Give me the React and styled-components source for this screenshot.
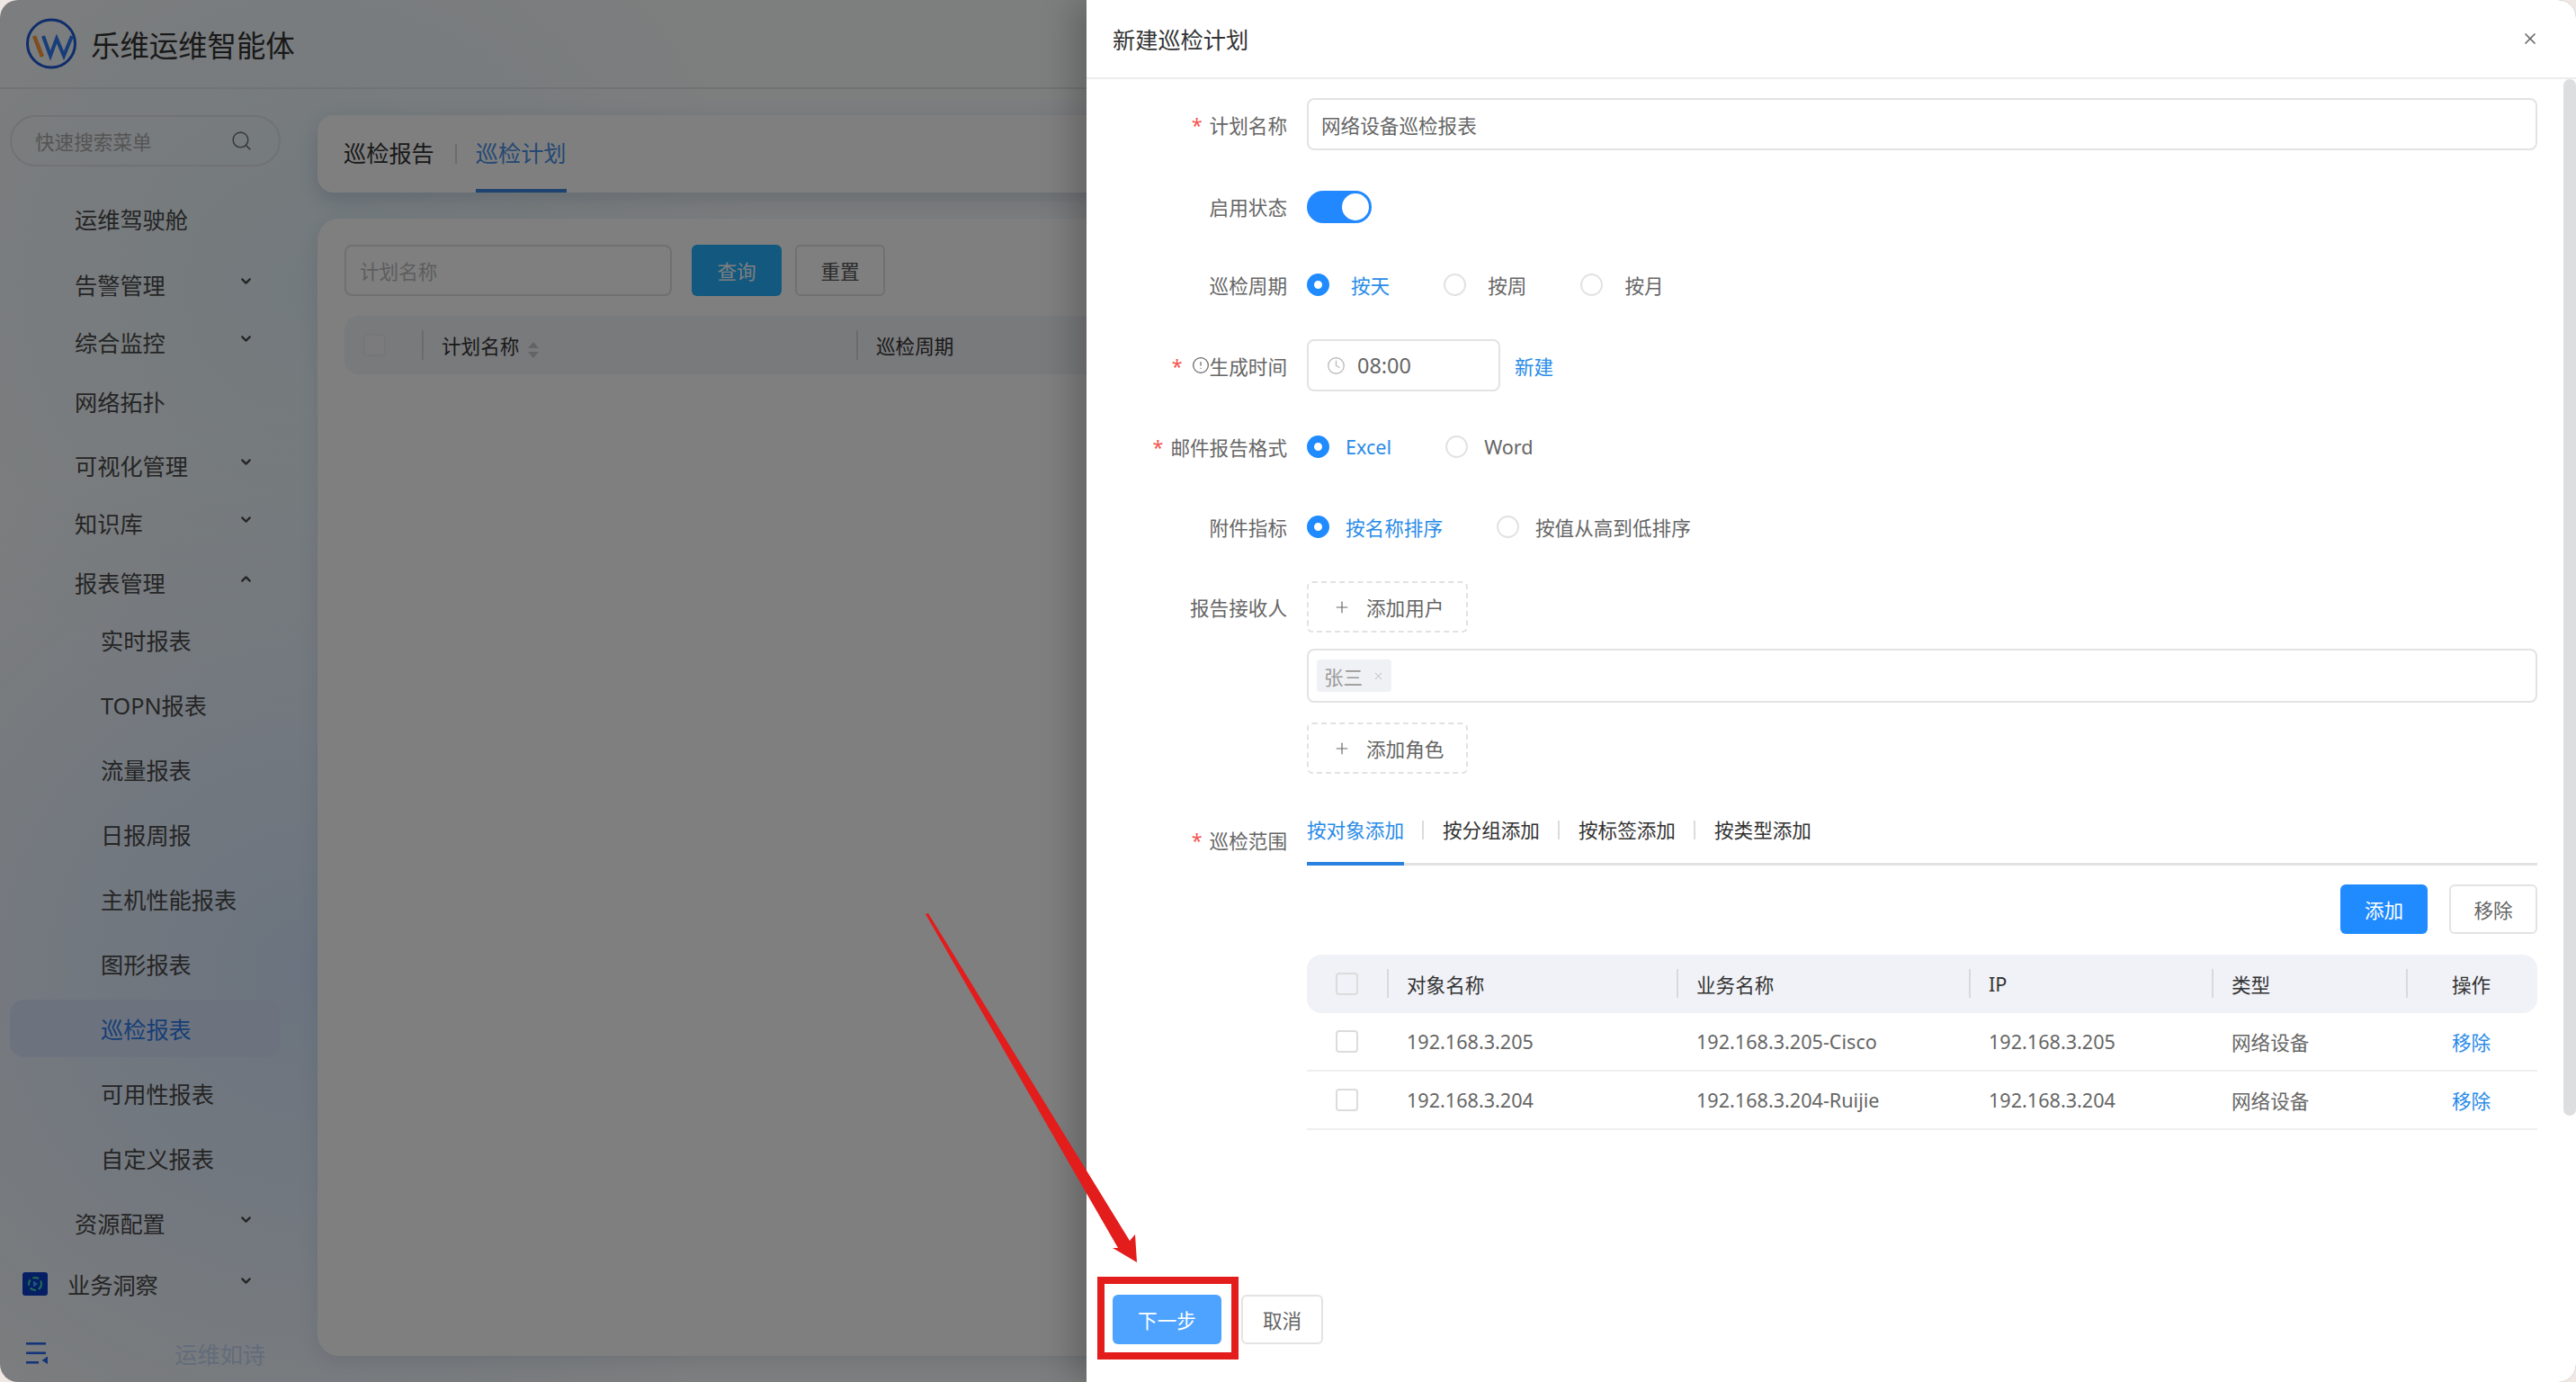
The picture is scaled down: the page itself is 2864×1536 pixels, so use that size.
import React from "react";
import styled, { createGlobalStyle } from "styled-components";
import { ChevronDown, ChevronUp, CircleAlert, Clock, Plus, Search, X } from "lucide-react";

const GlobalStyle = createGlobalStyle`
  html, body {
    margin: 0;
    width: 2864px;
    height: 1536px;
    overflow: hidden;
    background: #efe7e3;
  }
  * {
    box-sizing: border-box;
  }
  body {
    font-family: "Noto Sans", "Noto Sans CJK SC", sans-serif;
    font-size: 21.6px;
  }
`;

const menu = [
  { label: "运维驾驶舱", mt: 0 },
  { label: "告警管理", mt: 9, arrow: "down" },
  { label: "综合监控", mt: 0, arrow: "down" },
  { label: "网络拓扑", mt: 2 },
  { label: "可视化管理", mt: 7, arrow: "down" },
  { label: "知识库", mt: 0, arrow: "down" },
  { label: "报表管理", mt: 2, arrow: "up" },
  { label: "实时报表", mt: 0, sub: true },
  { label: "TOPN报表", mt: 8, sub: true },
  { label: "流量报表", mt: 8, sub: true },
  { label: "日报周报", mt: 8, sub: true },
  { label: "主机性能报表", mt: 8, sub: true },
  { label: "图形报表", mt: 8, sub: true },
  { label: "巡检报表", mt: 8, sub: true, active: true },
  { label: "可用性报表", mt: 8, sub: true },
  { label: "自定义报表", mt: 8, sub: true },
  { label: "资源配置", mt: 8, arrow: "down" },
];

const rows = [
  { name: "192.168.3.205", biz: "192.168.3.205-Cisco", ip: "192.168.3.205" },
  { name: "192.168.3.204", biz: "192.168.3.204-Ruijie", ip: "192.168.3.204" },
];

const Logo = () => (
  <svg width="56" height="57" viewBox="0 0 56 57" fill="none">
    <circle cx="28" cy="28.5" r="26.5" stroke="#1e5ad6" strokeWidth="3" />
    <path d="M9 20L18 43" stroke="#ff9a3c" strokeWidth="4.5" />
    <path d="M19 20L27 42L34 23L42 42L51 20" stroke="#2e7cf0" strokeWidth="4" />
  </svg>
);

const BizGlyph = () => (
  <svg width="28" height="26" viewBox="0 0 28 26">
    <rect width="28" height="26" rx="3" fill="#0a3cc8" />
    <circle cx="14" cy="13" r="7" fill="none" stroke="#3fe0a0" strokeWidth="2" strokeDasharray="7 3" />
    <path d="M12 9.5L17 13L12 16.5Z" fill="#3fb0ff" />
  </svg>
);

const FoldGlyph = () => (
  <svg width="25" height="24" viewBox="0 0 25 24" fill="#2a6af4">
    <rect y="0" width="22" height="2.6" />
    <rect y="10.5" width="22" height="2.6" />
    <rect y="21" width="14" height="2.6" />
    <path d="M24 15.5V24L17.5 20Z" />
  </svg>
);

const Annotation = () => (
  <AnnotationLayer viewBox="0 0 2864 1536">
    <polygon points="1029,1016 1032,1015 1256,1379 1262,1372 1264,1403 1237,1387 1243,1387" fill="#e31c1c" />
    <rect x="1224" y="1423" width="149" height="84" fill="none" stroke="#e31c1c" strokeWidth="8" />
  </AnnotationLayer>
);

const App = () => {
  return (
    <Frame>
      <GlobalStyle />
      <TopBar>
        <Logo />
        <Brand>乐维运维智能体</Brand>
      </TopBar>
      <Workspace>
        <Sidebar>
          <SearchPill>
            快速搜索菜单
            <Search size={25} strokeWidth={1.5} color="#777" />
          </SearchPill>
          <Menu>
            {menu.map((item) => (
              <MenuRow key={item.label} $mt={item.mt} $sub={item.sub} $active={item.active}>
                {item.label}
                {item.arrow === "down" && (
                  <MenuArrow>
                    <ChevronDown size={17} strokeWidth={3.2} />
                  </MenuArrow>
                )}
                {item.arrow === "up" && (
                  <MenuArrow>
                    <ChevronUp size={17} strokeWidth={3.2} />
                  </MenuArrow>
                )}
              </MenuRow>
            ))}
            <BizRow>
              <BizGlyph />
              业务洞察
              <MenuArrow>
                <ChevronDown size={17} strokeWidth={3.2} />
              </MenuArrow>
            </BizRow>
          </Menu>
          <SideFooter>
            <FoldGlyph />
            <Motto>运维如诗</Motto>
          </SideFooter>
        </Sidebar>
        <Main>
          <TabCard>
            <PageTab>巡检报告</PageTab>
            <TabDivider />
            <PageTab $active>巡检计划</PageTab>
          </TabCard>
          <ContentCard>
            <FilterBar>
              <FilterInput>计划名称</FilterInput>
              <FilterButton $primary>查询</FilterButton>
              <FilterButton>重置</FilterButton>
            </FilterBar>
            <PlanHead>
              <PlanCell>
                <Check $dim />
              </PlanCell>
              <PlanCell $divider>
                计划名称
                <SortArrows />
              </PlanCell>
              <PlanCell $divider>巡检周期</PlanCell>
              <PlanCell $divider />
            </PlanHead>
          </ContentCard>
        </Main>
      </Workspace>
      <Overlay />
      <Drawer>
        <DrawerHead>
          新建巡检计划
          <X size={20} strokeWidth={2} color="#666" />
        </DrawerHead>
        <DrawerBody>
          <Thumb />
          <FormRow>
            <Label>
              <Star>*</Star>计划名称
            </Label>
            <TextBox>网络设备巡检报表</TextBox>
          </FormRow>
          <FormRow $mt={34}>
            <Label>启用状态</Label>
            <Switch />
          </FormRow>
          <FormRow $mt={30}>
            <Label>巡检周期</Label>
            <RadioGroup>
              <RadioItem $on $gap={24}>
                <Radio $on />
                按天
              </RadioItem>
              <RadioItem $gap={24}>
                <Radio />
                按周
              </RadioItem>
              <RadioItem $gap={24}>
                <Radio />
                按月
              </RadioItem>
            </RadioGroup>
          </FormRow>
          <FormRow $mt={32}>
            <Label>
              <Star $gap={10}>*</Star>
              <CircleAlert size={20} strokeWidth={1.5} />
              生成时间
            </Label>
            <TimeBox>
              <Clock size={21} strokeWidth={1.5} color="#bbb" />
              08:00
            </TimeBox>
            <LinkText>新建</LinkText>
          </FormRow>
          <FormRow $mt={33}>
            <Label>
              <Star>*</Star>邮件报告格式
            </Label>
            <RadioGroup>
              <RadioItem $on>
                <Radio $on />
                Excel
              </RadioItem>
              <RadioItem>
                <Radio />
                Word
              </RadioItem>
            </RadioGroup>
          </FormRow>
          <FormRow $mt={32}>
            <Label>附件指标</Label>
            <RadioGroup>
              <RadioItem $on>
                <Radio $on />
                按名称排序
              </RadioItem>
              <RadioItem>
                <Radio />
                按值从高到低排序
              </RadioItem>
            </RadioGroup>
          </FormRow>
          <FormRow $mt={32}>
            <Label>报告接收人</Label>
            <DashedButton>
              <Plus size={20} strokeWidth={1.4} />
              添加用户
            </DashedButton>
          </FormRow>
          <FormRow $mt={18}>
            <span />
            <TagBox>
              <Tag>
                张三
                <X size={13} strokeWidth={1.5} color="#aaa" />
              </Tag>
            </TagBox>
          </FormRow>
          <FormRow $mt={22}>
            <span />
            <DashedButton>
              <Plus size={20} strokeWidth={1.4} />
              添加角色
            </DashedButton>
          </FormRow>
          <ScopeRow>
            <Label>
              <Star>*</Star>巡检范围
            </Label>
            <ScopeTabs>
              <ScopeTab $active>按对象添加</ScopeTab>
              <ScopeTab>按分组添加</ScopeTab>
              <ScopeTab>按标签添加</ScopeTab>
              <ScopeTab $last>按类型添加</ScopeTab>
            </ScopeTabs>
          </ScopeRow>
          <ScopePanel>
            <ScopeActions>
              <SolidButton>添加</SolidButton>
              <GhostButton>移除</GhostButton>
            </ScopeActions>
            <TableHead>
              <CheckCell>
                <Check $head />
              </CheckCell>
              <HeadCell>对象名称</HeadCell>
              <HeadCell>业务名称</HeadCell>
              <HeadCell>IP</HeadCell>
              <HeadCell>类型</HeadCell>
              <HeadCell $wide>操作</HeadCell>
            </TableHead>
            {rows.map((row) => (
              <TableRow key={row.name}>
                <CheckCell>
                  <Check />
                </CheckCell>
                <BodyCell>{row.name}</BodyCell>
                <BodyCell>{row.biz}</BodyCell>
                <BodyCell>{row.ip}</BodyCell>
                <BodyCell>网络设备</BodyCell>
                <BodyCell $wide $link>
                  移除
                </BodyCell>
              </TableRow>
            ))}
          </ScopePanel>
        </DrawerBody>
        <DrawerFoot>
          <NextButton>下一步</NextButton>
          <CancelButton>取消</CancelButton>
        </DrawerFoot>
      </Drawer>
      <Annotation />
    </Frame>
  );
};

export default App;

const Frame = styled.div`
  position: relative;
  display: flex;
  flex-direction: column;
  width: 2864px;
  height: 1536px;
  overflow: hidden;
  border-radius: 20px;
  color: #444;
  background:
    radial-gradient(circle 620px at 345px 1080px, #d6e8ff 0%, rgba(214, 232, 255, 0) 100%),
    radial-gradient(circle 500px at 345px 320px, #e6f4fb 0%, rgba(230, 244, 251, 0) 100%),
    #fafcfd;
`;

const TopBar = styled.header`
  display: flex;
  align-items: center;
  gap: 16px;
  flex: none;
  height: 99px;
  padding-left: 29px;
  border-bottom: 2px solid #e2e6ea;
`;

const Brand = styled.div`
  font-size: 32.4px;
  color: #333;
`;

const Workspace = styled.div`
  display: flex;
  flex: 1;
  min-height: 0;
`;

const Sidebar = styled.aside`
  display: flex;
  flex-direction: column;
  flex: none;
  width: 353px;
  padding-top: 29px;
`;

const SearchPill = styled.div`
  display: flex;
  align-items: center;
  justify-content: space-between;
  width: 301px;
  height: 57px;
  margin-left: 11px;
  padding: 0 29px 0 26px;
  border: 2px solid #e0e4e8;
  border-radius: 29px;
  color: #aaa;
`;

const Menu = styled.nav`
  display: flex;
  flex-direction: column;
  margin-top: 26px;
`;

const MenuRow = styled.div`
  position: relative;
  display: flex;
  align-items: center;
  width: 301px;
  height: 64px;
  margin-left: 11px;
  margin-top: ${(p) => p.$mt}px;
  padding-left: ${(p) => (p.$sub ? 101 : 72)}px;
  border-radius: 16px;
  font-size: 25.2px;
  color: ${(p) => (p.$active ? "#2f7dec" : "#4a4a4a")};
  background: ${(p) => (p.$active ? "#d8e6ff" : "transparent")};
`;

const MenuArrow = styled.span`
  position: absolute;
  top: 20px;
  left: 254px;
  display: flex;
  color: #4a4a4a;
`;

const BizRow = styled(MenuRow)`
  gap: 22px;
  margin-top: 4px;
  padding-left: 14px;
`;

const SideFooter = styled.div`
  display: flex;
  align-items: center;
  justify-content: space-between;
  height: 65px;
  margin-top: auto;
  padding: 0 58px 0 29px;
`;

const Motto = styled.span`
  font-size: 25.2px;
  color: #c6d8f4;
`;

const Main = styled.main`
  display: flex;
  flex-direction: column;
  flex: 1;
  gap: 29px;
  padding: 29px 29px 29px 0;
`;

const TabCard = styled.div`
  display: flex;
  align-items: stretch;
  flex: none;
  height: 86px;
  padding-left: 29px;
  border-radius: 18px;
  background: #fff;
  box-shadow: 0 8px 24px rgba(60, 90, 130, 0.22);
`;

const PageTab = styled.div`
  display: flex;
  align-items: center;
  height: 86px;
  font-size: 25.2px;
  color: ${(p) => (p.$active ? "#4a90e8" : "#333")};
  border-bottom: 4px solid ${(p) => (p.$active ? "#3d86e0" : "transparent")};
`;

const TabDivider = styled.span`
  align-self: center;
  width: 2px;
  height: 22px;
  margin: 0 21px 0 23px;
  background: #d8d8d8;
`;

const ContentCard = styled.section`
  flex: 1;
  padding: 29px 30px;
  border-radius: 24px;
  background: #fff;
  box-shadow: 0 6px 22px rgba(60, 90, 130, 0.12);
`;

const FilterBar = styled.div`
  display: flex;
  align-items: center;
  gap: 15px;
  margin-bottom: 22px;
`;

const FilterInput = styled.div`
  display: flex;
  align-items: center;
  width: 364px;
  height: 57px;
  margin-right: 7px;
  padding-left: 15px;
  border: 2px solid #dfe1e4;
  border-radius: 8px;
  color: #bbb;
`;

const FilterButton = styled.div`
  display: flex;
  align-items: center;
  justify-content: center;
  width: 100px;
  height: 57px;
  border: 2px solid ${(p) => (p.$primary ? "transparent" : "#dfe1e4")};
  border-radius: 6px;
  color: ${(p) => (p.$primary ? "#fff" : "#555")};
  background: ${(p) => (p.$primary ? "#24b0ff" : "#fff")};
`;

const PlanHead = styled.div`
  display: grid;
  grid-template-columns: 86px 483px 256px 1fr;
  height: 65px;
  border-radius: 16px;
  background: #f3f4f8;
`;

const PlanCell = styled.div`
  position: relative;
  display: flex;
  align-items: center;
  gap: 10px;
  padding-left: ${(p) => (p.$divider ? 22 : 21)}px;
  color: #333;

  &::before {
    content: "";
    display: ${(p) => (p.$divider ? "block" : "none")};
    position: absolute;
    left: 0;
    top: 16px;
    width: 2px;
    height: 33px;
    background: #d5d6da;
  }
`;

const SortArrows = styled.span`
  display: inline-block;
  width: 0;
  height: 0;
  margin-left: 0;
  border-left: 6px solid transparent;
  border-right: 6px solid transparent;
  border-bottom: 7px solid #c8c8c8;
  box-shadow: none;
  position: relative;

  &::after {
    content: "";
    position: absolute;
    left: -6px;
    top: 11px;
    border-left: 6px solid transparent;
    border-right: 6px solid transparent;
    border-top: 7px solid #c8c8c8;
  }
`;

const Check = styled.span`
  display: block;
  width: 25px;
  height: 25px;
  border: 2px solid ${(p) => (p.$dim ? "#eceef2" : "#dcdcdc")};
  border-radius: 4px;
  background: ${(p) => (p.$head ? "#f1f2f7" : p.$dim ? "#f6f7fa" : "#fff")};
`;

const Overlay = styled.div`
  position: absolute;
  inset: 0;
  background: rgba(0, 0, 0, 0.5);
`;

const Drawer = styled.aside`
  position: absolute;
  top: 0;
  right: 0;
  bottom: 0;
  display: flex;
  flex-direction: column;
  width: 1656px;
  background: #fff;
  color: #666;
  box-shadow: -14px 0 36px rgba(0, 0, 0, 0.22);
`;

const DrawerHead = styled.div`
  display: flex;
  align-items: center;
  justify-content: space-between;
  flex: none;
  height: 88px;
  padding: 0 41px 0 29px;
  border-bottom: 2px solid #ececec;
  font-size: 25.2px;
  color: #333;
`;

const DrawerBody = styled.div`
  position: relative;
  flex: 1;
  min-height: 0;
  padding: 21px 43px 0 0;
`;

const Thumb = styled.div`
  position: absolute;
  top: 0;
  right: 0;
  width: 14px;
  height: 1152px;
  border-radius: 7px;
  background: #dddee0;
`;

const FormRow = styled.div`
  display: grid;
  grid-template-columns: 223px auto 1fr;
  column-gap: 22px;
  align-items: center;
  min-height: 57px;
  margin-top: ${(p) => p.$mt || 0}px;
`;

const Label = styled.label`
  display: flex;
  align-items: center;
  justify-content: flex-end;
  color: #666;

  svg {
    flex: none;
  }
`;

const Star = styled.span`
  margin-right: ${(p) => p.$gap || 8}px;
  color: #f5534f;
`;

const TextBox = styled.div`
  grid-column: 2 / 4;
  display: flex;
  align-items: center;
  height: 58px;
  padding-left: 14px;
  border: 2px solid #e3e3e3;
  border-radius: 8px;
  color: #666;
`;

const Switch = styled.div`
  position: relative;
  width: 72px;
  height: 36px;
  border-radius: 18px;
  background: #2188ff;

  &::after {
    content: "";
    position: absolute;
    top: 3px;
    right: 3px;
    width: 30px;
    height: 30px;
    border-radius: 50%;
    background: #fff;
  }
`;

const RadioGroup = styled.div`
  grid-column: 2 / 4;
  display: flex;
  align-items: center;
  gap: 60px;
`;

const RadioItem = styled.div`
  display: flex;
  align-items: center;
  gap: ${(p) => p.$gap || 18}px;
  color: ${(p) => (p.$on ? "#2a8be8" : "#666")};
`;

const Radio = styled.span`
  display: block;
  flex: none;
  width: 25px;
  height: 25px;
  border-radius: 50%;
  border: ${(p) => (p.$on ? "8px solid #1f8bff" : "2px solid #e2e2e2")};
  background: #fff;
`;

const TimeBox = styled.div`
  display: flex;
  align-items: center;
  gap: 13px;
  width: 215px;
  height: 58px;
  padding-left: 20px;
  border: 2px solid #e3e3e3;
  border-radius: 8px;
  font-size: 23.4px;
  color: #666;
`;

const LinkText = styled.a`
  margin-left: -6px;
  color: #2a8be8;
`;

const DashedButton = styled.div`
  display: flex;
  align-items: center;
  gap: 17px;
  width: 179px;
  height: 57px;
  padding-left: 27px;
  border: 2px dashed #e2e2e2;
  border-radius: 6px;
  color: #666;
`;

const TagBox = styled.div`
  grid-column: 2 / 4;
  display: flex;
  align-items: center;
  height: 60px;
  padding-left: 9px;
  border: 2px solid #e3e3e3;
  border-radius: 8px;
`;

const Tag = styled.span`
  display: flex;
  align-items: center;
  gap: 11px;
  width: 83px;
  height: 36px;
  padding-left: 8px;
  border-radius: 4px;
  background: #f0f1f5;
  color: #9a9a9a;
`;

const ScopeRow = styled.div`
  display: grid;
  grid-template-columns: 223px 1fr;
  column-gap: 22px;
  margin-top: 44px;
`;

const ScopeTabs = styled.div`
  display: flex;
  border-bottom: 3px solid #e2e2e2;
`;

const ScopeTab = styled.div`
  position: relative;
  display: flex;
  align-items: center;
  height: 58px;
  margin-bottom: -3px;
  padding-bottom: 19px;
  margin-right: ${(p) => (p.$last ? 0 : 43)}px;
  color: ${(p) => (p.$active ? "#2a8be8" : "#333")};
  border-bottom: 4px solid ${(p) => (p.$active ? "#2a82e0" : "transparent")};

  &::after {
    content: "";
    display: ${(p) => (p.$last ? "none" : "block")};
    position: absolute;
    right: -22px;
    top: 8px;
    width: 2px;
    height: 21px;
    background: #dcdcdc;
  }
`;

const ScopePanel = styled.div`
  margin-left: 245px;
`;

const ScopeActions = styled.div`
  display: flex;
  justify-content: flex-end;
  gap: 24px;
  margin-top: 21px;
  margin-bottom: 23px;
`;

const SolidButton = styled.div`
  display: flex;
  align-items: center;
  justify-content: center;
  width: 97px;
  height: 55px;
  border-radius: 6px;
  background: #1f8bff;
  color: #fff;
`;

const GhostButton = styled(SolidButton)`
  width: 98px;
  border: 2px solid #e3e3e3;
  background: #fff;
  color: #666;
`;

const TableHead = styled.div`
  display: grid;
  grid-template-columns: 89px 322px 325px 270px 216px 146px;
  height: 65px;
  border-radius: 16px;
  background: #f1f2f7;
`;

const TableRow = styled(TableHead)`
  border-radius: 0;
  background: none;
  border-bottom: 2px solid #efefef;
`;

const CheckCell = styled.div`
  display: flex;
  align-items: center;
  padding-left: 32px;
`;

const HeadCell = styled.div`
  position: relative;
  display: flex;
  align-items: center;
  padding-left: ${(p) => (p.$wide ? 51 : 22)}px;
  color: #333;

  &::before {
    content: "";
    position: absolute;
    left: 0;
    top: 16px;
    width: 2px;
    height: 32px;
    background: #d8d9dd;
  }
`;

const BodyCell = styled.div`
  display: flex;
  align-items: center;
  padding-left: ${(p) => (p.$wide ? 51 : 22)}px;
  color: ${(p) => (p.$link ? "#2a8be8" : "#666")};
`;

const DrawerFoot = styled.div`
  display: flex;
  gap: 22px;
  flex: none;
  height: 97px;
  padding-left: 29px;
`;

const NextButton = styled.div`
  display: flex;
  align-items: center;
  justify-content: center;
  width: 121px;
  height: 55px;
  border-radius: 6px;
  background: #4da3ff;
  color: #fff;
`;

const CancelButton = styled(NextButton)`
  width: 91px;
  border: 2px solid #e3e3e3;
  background: #fff;
  color: #666;
`;

const AnnotationLayer = styled.svg`
  position: absolute;
  inset: 0;
  width: 2864px;
  height: 1536px;
  pointer-events: none;
`;
